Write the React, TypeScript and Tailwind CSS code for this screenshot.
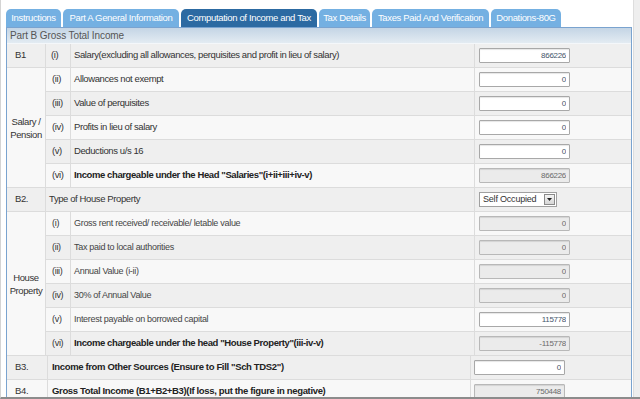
import React from 'react';

type Row = {
  no: string;
  label: string;
  value: string;
  bold?: boolean;
  locked?: boolean;
};

const salaryRows: Row[] = [
  { no: '(ii)', label: 'Allowances not exempt', value: '0' },
  { no: '(iii)', label: 'Value of perquisites', value: '0' },
  { no: '(iv)', label: 'Profits in lieu of salary', value: '0' },
  { no: '(v)', label: 'Deductions u/s 16', value: '0' },
  { no: '(vi)', label: 'Income chargeable under the Head "Salaries"(i+ii+iii+iv-v)', value: '866226', bold: true, locked: true },
];

const houseRows: Row[] = [
  { no: '(i)', label: 'Gross rent received/ receivable/ letable value', value: '0', locked: true },
  { no: '(ii)', label: 'Tax paid to local authorities', value: '0', locked: true },
  { no: '(iii)', label: 'Annual Value (i-ii)', value: '0', locked: true },
  { no: '(iv)', label: '30% of Annual Value', value: '0', locked: true },
  { no: '(v)', label: 'Interest payable on borrowed capital', value: '115778' },
  { no: '(vi)', label: 'Income chargeable under the head "House Property"(iii-iv-v)', value: '-115778', bold: true, locked: true },
];

const tabs = [
  { label: 'Instructions', w: 'w-[55px]' },
  { label: 'Part A General Information', w: 'w-[116px]' },
  { label: 'Computation of Income and Tax', w: 'w-[136px]', active: true },
  { label: 'Tax Details', w: 'w-[51px]' },
  { label: 'Taxes Paid And Verification', w: 'w-[117px]' },
  { label: 'Donations-80G', w: 'w-[70px]' },
];

const bg = (i: number) => (i % 2 === 0 ? 'bg-[#efefef]' : 'bg-[#f8f8f8]');
const cell = 'border-r border-b border-[#dcdcdc] flex items-center whitespace-nowrap';

function Field({ value, locked }: { value: string; locked?: boolean }) {
  return (
    <input
      readOnly
      value={value}
      className={`w-[91px] h-[15px] border rounded-[1px] text-right pr-[3px] text-[8px] tracking-[-0.3px] outline-none
        shadow-[inset_0_1px_1px_rgba(0,0,0,0.1)]
        ${locked ? 'bg-[#ebebeb] border-[#b8b8b8] text-[#6a6a6a]' : 'bg-white border-[#a8a8a8] text-[#44556a]'}`}
    />
  );
}

function HouseSelect() {
  return (
    <div className="w-[78px] h-[15px] border border-[#a0a0a0] bg-white flex items-center justify-between pl-[3px] pr-[1px]">
      <span className="text-[9px] tracking-[-0.2px] text-[#333] whitespace-nowrap">Self Occupied</span>
      <span className="w-[11px] h-[11px] border border-[#8a8a8a] bg-gradient-to-b from-[#f4f4f4] to-[#d6d6d6] flex items-center justify-center">
        <svg width="5" height="3" viewBox="0 0 5 3">
          <path d="M0 0h5L2.5 3z" fill="#222" />
        </svg>
      </span>
    </div>
  );
}

export default function App() {
  return (
    <div className="w-[640px] h-[399px] overflow-hidden flex bg-white border-l border-[#d4d4d4] border-b-2 border-b-[#8c8c8c] font-['Liberation_Sans',Arial,sans-serif] text-[#333]">
      <div className="flex-1 pl-[5px] pt-[9px]">
        {/* Tabs */}
        <div className="flex gap-[2px] h-[18px]">
          {tabs.map((t) => (
            <div
              key={t.label}
              className={`${t.w} rounded-t-[5px] flex items-center justify-center whitespace-nowrap text-[9.5px] tracking-[-0.35px] text-white ${
                t.active ? 'bg-[#2c6aa2]' : 'bg-[#74b0e2]'
              }`}
            >
              {t.label}
            </div>
          ))}
        </div>

        {/* Panel */}
        <div className="w-[626px] border-x border-t border-[#7aa3cf]">
          <div className="h-[16px] px-[3px] flex items-center bg-gradient-to-b from-[#c4d5e5] to-[#e3ebf2] border-b border-[#f4f7fa] text-[10px] tracking-[-0.1px] text-[#555]">
            Part B Gross Total Income
          </div>

          <div className="grid grid-cols-[39px_25px_404px_156px] auto-rows-[24px] text-[9.5px] tracking-[-0.4px]">
            {/* B1 */}
            <div className={`${cell} ${bg(0)} pl-[8px]`}>B1</div>
            <div className={`${cell} ${bg(0)} pl-[5px]`}>(i)</div>
            <div className={`${cell} ${bg(0)} pl-[3px]`}>Salary(excluding all allowances, perquisites and profit in lieu of salary)</div>
            <div className={`border-b border-[#dcdcdc] flex items-center ${bg(0)} pl-[4px]`}>
              <Field value="866226" />
            </div>

            <div className={`${cell} row-span-5 bg-[#f8f8f8] justify-center text-center leading-[13px]`}>
              Salary /<br />Pension
            </div>
            {salaryRows.map((r, i) => (
              <React.Fragment key={r.no}>
                <div className={`${cell} ${bg(i + 1)} pl-[6px]`}>{r.no}</div>
                <div className={`${cell} ${bg(i + 1)} pl-[3px] ${r.bold ? 'font-bold text-[#222]' : ''}`}>{r.label}</div>
                <div className={`border-b border-[#dcdcdc] flex items-center ${bg(i + 1)} pl-[4px]`}>
                  <Field value={r.value} locked={r.locked} />
                </div>
              </React.Fragment>
            ))}

            {/* B2 */}
            <div className={`${cell} ${bg(6)} pl-[8px]`}>B2.</div>
            <div className={`${cell} ${bg(6)} col-span-2 pl-[3px]`}>Type of House Property</div>
            <div className={`border-b border-[#dcdcdc] flex items-center ${bg(6)} pl-[4px]`}>
              <HouseSelect />
            </div>

            <div className={`${cell} row-span-6 bg-[#f8f8f8] justify-center text-center leading-[13px]`}>
              House<br />Property
            </div>
            {houseRows.map((r, i) => (
              <React.Fragment key={r.no}>
                <div className={`${cell} ${bg(i + 7)} pl-[6px] text-[9px] tracking-[-0.3px]`}>{r.no}</div>
                <div className={`${cell} ${bg(i + 7)} pl-[3px] ${r.bold ? 'font-bold text-[#222]' : 'text-[9px] tracking-[-0.3px] text-[#444]'}`}>{r.label}</div>
                <div className={`border-b border-[#dcdcdc] flex items-center ${bg(i + 7)} pl-[4px]`}>
                  <Field value={r.value} locked={r.locked} />
                </div>
              </React.Fragment>
            ))}
          </div>

          {/* B3 / B4 */}
          <div className="grid grid-cols-[41px_423px_160px] auto-rows-[24px] text-[9.5px] tracking-[-0.35px]">
            <div className={`${cell} bg-[#efefef] pl-[8px]`}>B3.</div>
            <div className={`${cell} bg-[#efefef] pl-[4px] font-bold text-[#222]`}>Income from Other Sources (Ensure to Fill "Sch TDS2")</div>
            <div className="border-b border-[#dcdcdc] flex items-center bg-[#efefef] pl-[3px]">
              <Field value="0" />
            </div>
            <div className={`${cell} bg-[#f8f8f8] pl-[8px]`}>B4.</div>
            <div className={`${cell} bg-[#f8f8f8] pl-[4px] font-bold text-[#222]`}>Gross Total Income (B1+B2+B3)(If loss, put the figure in negative)</div>
            <div className="border-b border-[#dcdcdc] flex items-center bg-[#f8f8f8] pl-[3px]">
              <Field value="750448" locked />
            </div>
          </div>
        </div>
      </div>
      <div className="w-[7px] bg-[#eeeeee] border-l border-[#dddddd]" />
    </div>
  );
}
